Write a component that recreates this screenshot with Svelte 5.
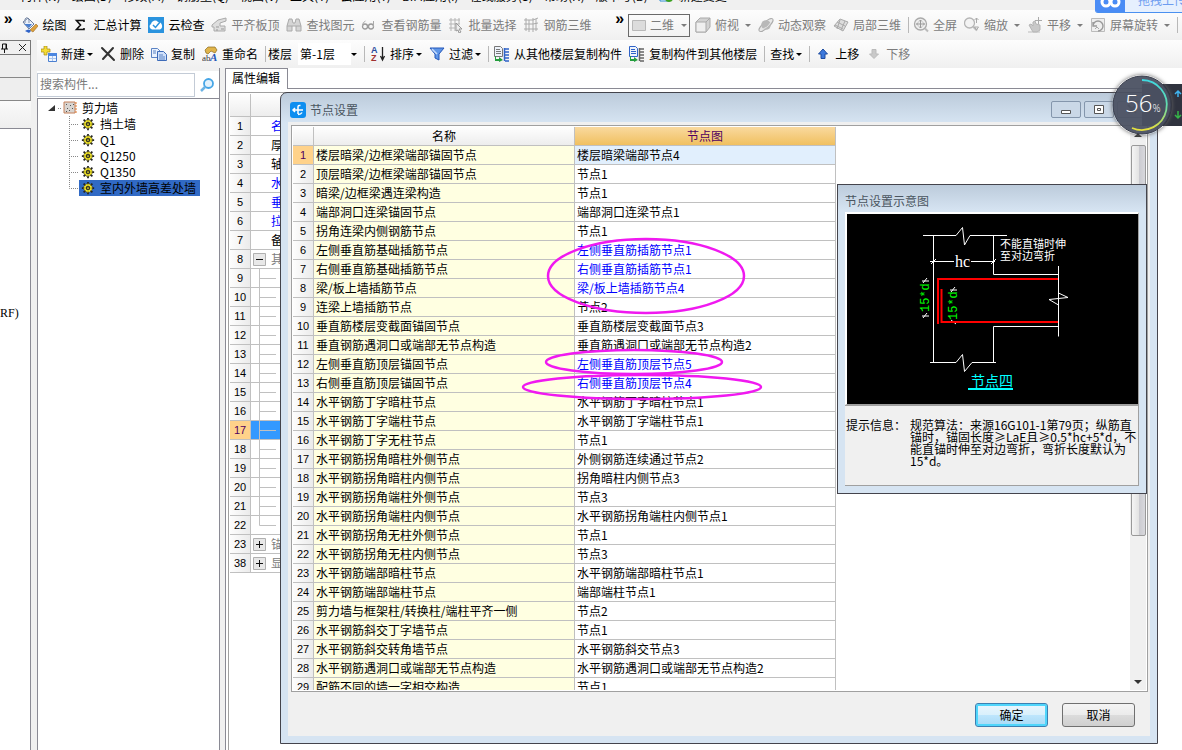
<script lang="ts">
    interface Tool {
        icon?: string;
        label?: string;
        caret?: boolean;
        off?: boolean;
        sep?: boolean;
    }

    const menus = ["构件(N)", "绘图(D)", "修改(M)", "钢筋量(Q)", "视图(V)", "工具(T)", "云应用(Y)", "BIM应用(I)", "在线服务(S)", "帮助(H)", "版本号(B)"];

    const mainTools: Tool[] = [
        { icon: "paint", label: "绘图" },
        { icon: "sum", label: "汇总计算" },
        { icon: "cloud", label: "云检查" },
        { icon: "slab", label: "平齐板顶", off: true },
        { icon: "find", label: "查找图元", off: true },
        { icon: "glasses", label: "查看钢筋量", off: true },
        { icon: "batch", label: "批量选择", off: true },
        { icon: "mesh", label: "钢筋三维", off: true },
    ];

    const viewTools: Tool[] = [
        { icon: "cube", label: "俯视", caret: true, off: true },
        { icon: "planet", label: "动态观察", off: true },
        { icon: "part", label: "局部三维", off: true },
        { sep: true },
        { icon: "full", label: "全屏", off: true },
        { icon: "zoom", label: "缩放", caret: true, off: true },
        { icon: "pan", label: "平移", caret: true, off: true },
        { icon: "rotate", label: "屏幕旋转", caret: true, off: true },
        { sep: true },
    ];

    const editTools: Tool[] = [
        { icon: "new", label: "新建", caret: true },
        { icon: "delete", label: "删除" },
        { icon: "copy", label: "复制" },
        { icon: "rename", label: "重命名" },
        { sep: true },
    ];

    const floorTools: Tool[] = [
        { sep: true },
        { icon: "sort", label: "排序", caret: true },
        { icon: "filter", label: "过滤", caret: true },
        { sep: true },
        { icon: "copyFrom", label: "从其他楼层复制构件" },
        { icon: "copyTo", label: "复制构件到其他楼层" },
        { sep: true },
        { label: "查找", caret: true },
        { sep: true },
        { icon: "up", label: "上移" },
        { icon: "down", label: "下移", off: true },
    ];

    const walls = ["挡土墙", "Q1", "Q1250", "Q1350", "室内外墙高差处墙"];
    let currentWall = $state(4);

    const props = [
        { no: 1, name: "名称", kind: "key" },
        { no: 2, name: "厚度", kind: "" },
        { no: 3, name: "轴线", kind: "" },
        { no: 4, name: "水平", kind: "key" },
        { no: 5, name: "垂直", kind: "key" },
        { no: 6, name: "拉筋", kind: "key" },
        { no: 7, name: "备注", kind: "" },
        { no: 8, name: "其它", kind: "open" },
        ...Array.from({ length: 14 }, (_, i) => ({ no: i + 9, name: "", kind: "child" })),
        { no: 23, name: "锚固", kind: "closed" },
        { no: 38, name: "显示", kind: "closed" },
    ];

    const nodes = [
        ["楼层暗梁/边框梁端部锚固节点", "楼层暗梁端部节点4"],
        ["顶层暗梁/边框梁端部锚固节点", "节点1"],
        ["暗梁/边框梁遇连梁构造", "节点1"],
        ["端部洞口连梁锚固节点", "端部洞口连梁节点1"],
        ["拐角连梁内侧钢筋节点", "节点1"],
        ["左侧垂直筋基础插筋节点", "左侧垂直筋插筋节点1"],
        ["右侧垂直筋基础插筋节点", "右侧垂直筋插筋节点1"],
        ["梁/板上墙插筋节点", "梁/板上墙插筋节点4"],
        ["连梁上墙插筋节点", "节点2"],
        ["垂直筋楼层变截面锚固节点", "垂直筋楼层变截面节点3"],
        ["垂直钢筋遇洞口或端部无节点构造", "垂直筋遇洞口或端部无节点构造2"],
        ["左侧垂直筋顶层锚固节点", "左侧垂直筋顶层节点5"],
        ["右侧垂直筋顶层锚固节点", "右侧垂直筋顶层节点4"],
        ["水平钢筋丁字暗柱节点", "水平钢筋丁字暗柱节点1"],
        ["水平钢筋丁字端柱节点", "水平钢筋丁字端柱节点1"],
        ["水平钢筋丁字无柱节点", "节点1"],
        ["水平钢筋拐角暗柱外侧节点", "外侧钢筋连续通过节点2"],
        ["水平钢筋拐角暗柱内侧节点", "拐角暗柱内侧节点3"],
        ["水平钢筋拐角端柱外侧节点", "节点3"],
        ["水平钢筋拐角端柱内侧节点", "水平钢筋拐角端柱内侧节点1"],
        ["水平钢筋拐角无柱外侧节点", "节点1"],
        ["水平钢筋拐角无柱内侧节点", "节点3"],
        ["水平钢筋端部暗柱节点", "水平钢筋端部暗柱节点1"],
        ["水平钢筋端部端柱节点", "端部端柱节点1"],
        ["剪力墙与框架柱/转换柱/端柱平齐一侧", "节点2"],
        ["水平钢筋斜交丁字墙节点", "节点1"],
        ["水平钢筋斜交转角墙节点", "水平钢筋斜交节点3"],
        ["水平钢筋遇洞口或端部无节点构造", "水平钢筋遇洞口或端部无节点构造2"],
        ["配筋不同的墙一字相交构造", "节点1"],
    ];
    const changed = [6, 7, 8, 12, 13];
    let currentNode = $state(1);
</script>

{#snippet icon(name: string)}
    <svg class="icon" viewBox="0 0 16 16" width="16" height="16" aria-hidden="true">
        {#if name === "paint"}
            <path d="M1 5 6 1l6 6-5 5z" fill="#eaf0fa" stroke="#6b7d9c" />
            <path d="M3 6V2q2-3 4 1v3" fill="none" stroke="#8493ad" />
            <path d="M2 7h8l-3 4z" fill="#4a7fd0" />
            <path d="m8 13 6-6 2 2-5 6z" fill="#dda13c" stroke="#9c6a22" stroke-width=".6" />
            <path d="M3 14q4-3 6 0l-2 2z" fill="#2f63c8" />
        {:else if name === "sum"}
            <path d="M11 5V3.500H3.500L7.500 8l-4 4.500H11V11" fill="none" stroke="#111" stroke-width="1.600" />
        {:else if name === "cloud"}
            <path d="M0 0h16v16H0z" fill="#2a93de" />
            <path d="M4 12.500a3 3 0 0 1-1-5.500 4 4 0 0 1 7-2 4 4 0 0 1 2 7.500z" fill="#fff" />
            <path d="m5 8 2.500 2.500L12 5" fill="none" stroke="#2a93de" stroke-width="1.500" />
        {:else if name === "slab"}
            <path d="M1 8 7 3l8-2v3L9 6v3h5v5H3v-4H1z" fill="#dedede" stroke="#aaa" />
            <path d="M5 10h3m2 2h3M5 13h2" stroke="#999" />
        {:else if name === "find"}
            <path d="m1 9 2-7h3l1 4h2l1-4h3l2 7v5h-5V9H6v5H1z" fill="#d5d5d5" stroke="#aaa" />
            <path d="M1 9h5m4 0h5" stroke="#aaa" />
        {:else if name === "glasses"}
            <circle cx="4" cy="9.500" r="2.500" fill="none" stroke="#999" stroke-width="1.300" />
            <circle cx="10" cy="9.500" r="2.500" fill="none" stroke="#999" stroke-width="1.300" />
            <path d="M1.500 9q0-4 3-5m8 6V4M6.500 9h1" fill="none" stroke="#aaa" />
        {:else if name === "batch"}
            <path d="M1 3h11M1 7h11M1 11h6M3 1v13M7 1v13M11 1v6" stroke="#b5b5b5" />
            <path d="m8 6 6 6h-3l2 3-2 1-1-3-2 1z" fill="#eee" stroke="#999" />
        {:else if name === "mesh"}
            <path d="M1 3h9l5-2M1 7h9l5-1M1 12h14M3 1v13M6 3v12M10 1v14M13 2v12" fill="none" stroke="#aaa" />
        {:else if name === "flat"}
            <path d="M1.500 3.500h13v10h-13z" fill="#dcdcdc" stroke="#b8b8b8" />
        {:else if name === "cube"}
            <path d="M1 5 5 1h10v9l-4 5H1z" fill="#d2d2d2" stroke="#aaa" />
            <path d="M1 5h10v10H1z" fill="#efefef" stroke="#aaa" />
            <path d="m11 5 4-4" stroke="#aaa" />
        {:else if name === "planet"}
            <ellipse cx="8" cy="8" rx="9" ry="3" transform="rotate(-42 8 8)" fill="#e8e8e8" stroke="#aaa" />
            <circle cx="8" cy="8" r="4.800" fill="#b8b8b8" />
            <path d="M3 12Q9 12 13 5" fill="none" stroke="#e5e5e5" />
        {:else if name === "part"}
            <path d="m1 9 6-7 8 3-5 9z" fill="#ddd" stroke="#aaa" />
            <path d="m4 5 8 4M7 3 4 12m8-8-4 9M2 8l8 4" stroke="#aaa" />
        {:else if name === "full"}
            <circle cx="7.500" cy="7" r="6" fill="#eee" stroke="#aaa" stroke-width="1.300" />
            <path d="M7.500 3v8m-4-4h8M6 4.500 7.500 3 9 4.500M6 9.500 7.500 11 9 9.500m1-4L11.500 7 10 8.500M5 5.500 3.500 7 5 8.500" fill="none" stroke="#999" />
            <path d="m12 11.500 3 3" stroke="#bbb" stroke-width="2" />
        {:else if name === "zoom"}
            <circle cx="5.500" cy="6" r="5" fill="#f3f3f3" stroke="#b5b5b5" stroke-width="1.300" />
            <path d="m9 9.500 4 4" stroke="#bbb" stroke-width="2" />
            <path d="M12.500 1v5m-2-3 2-2 2 2m-4 7h4l-2 3z" fill="none" stroke="#aaa" />
        {:else if name === "pan"}
            <path d="m2 8 2-1 2 2V5l2-1 1 3 4 1v5l-3 2H6z" fill="#c9c9c9" stroke="#b5b5b5" />
            <path d="M11.500 0v7M8 3.500h7" stroke="#aaa" />
            <path d="M1 15h12" stroke="#bbb" />
        {:else if name === "rotate"}
            <path d="M1.500 1.500h13v13h-13z" fill="#eee" stroke="#bbb" />
            <path d="M3 9a5 5 0 1 1 5 5M3 5v4h4" fill="none" stroke="#999" stroke-width="1.400" />
            <path d="m5 12 2-2 2 2" fill="none" stroke="#aaa" />
        {:else if name === "new"}
            <path d="M3 0h3v3h3v3H6v3H3V6H0V3h3z" fill="#f5dc35" stroke="#a88b18" stroke-width=".7" />
            <path d="M7.500 7.500h8v8h-8z" fill="#eef5ff" stroke="#4b7fd0" />
            <path d="M7 7h9v3H7z" fill="#4b86e0" />
            <path d="M8 12.500h7M11.500 10v5" stroke="#a9c4ec" />
        {:else if name === "delete"}
            <path d="m2 2 12 12M13 2 3 13" stroke="#333" stroke-width="2" stroke-linecap="round" />
        {:else if name === "copy"}
            <path d="M.5 2.500h6l3 3v6h-9z" fill="#e9f1fd" stroke="#5b83c4" />
            <path d="M6.500 5.500h6l3 3v6h-9z" fill="#cfe0fa" stroke="#3d6bb8" />
            <path d="M2 5h3M2 7h3M8 9h4m-4 2h6m-6 2h6" stroke="#5b83c4" />
        {:else if name === "rename"}
            <path d="m3 4 3-3h7l2 3-2 3-4-2-3 3-2-1z" fill="#e0b44a" stroke="#8a6a20" stroke-width=".7" />
            <text x="0" y="15" font-size="9" font-family="Liberation Serif, serif" fill="#333">ab</text>
            <text x="8" y="15" font-size="11" font-weight="bold" font-style="italic" font-family="Liberation Serif, serif" fill="#2456b8">A</text>
        {:else if name === "sort"}
            <text x="1" y="7" font-size="9" font-weight="bold" font-family="Liberation Sans, sans-serif" fill="#2b4c9c">A</text>
            <text x="1" y="15" font-size="9" font-weight="bold" font-family="Liberation Sans, sans-serif" fill="#a03030">Z</text>
            <path d="M12.500 1v12m-2-3 2 4 2-4" fill="none" stroke="#222" stroke-width="1.300" />
        {:else if name === "filter"}
            <path d="M1 2h14l-5 6v6l-4-2V8z" fill="#5f96e8" stroke="#2456b8" />
            <path d="m3 3 5 5" stroke="#c7dcfb" stroke-width="1.500" />
        {:else if name === "copyFrom" || name === "copyTo"}
            <g class={name}>
                <path class="page" d="M.5.5h6l2 2v8h-8z" />
                <path class="line" d="M2 3.500h4M2 5.500h5M2 7.500h5" />
                <path class="stack" d="M11 3h4M11 6h4M11 9h4M11 12h4M11 15h4M10.500 2v13" />
            </g>
            <path d="M2 10v3h3v-2l4 3-4 2v-1H1v-5z" fill="#239c3c" />
        {:else if name === "up"}
            <path d="M8 3 3.500 8H6v4.500h4V8h2.500z" fill="#3c78dc" stroke="#1d4ba0" />
        {:else if name === "down"}
            <path d="M8 12.500 3.500 8H6V3.500h4V8h2.500z" fill="#c9c9c9" stroke="#bbb" />
        {:else if name === "gear"}
            <path d="M8 1v14M1 8h14M3 3l10 10M13 3 3 13" stroke="#222" stroke-width="2" />
            <circle cx="8" cy="8" r="5" fill="#f5e928" stroke="#333" stroke-dasharray="2 1" />
            <path d="M8 3v10M3 8h10M4.500 4.500l7 7m0-7-7 7" stroke="#77701a" stroke-width=".7" />
            <circle cx="8" cy="8" r="1.700" fill="#f5e928" stroke="#222" stroke-width="1.400" />
        {:else if name === "wall"}
            <path d="M2 2h11v11H2z" fill="#d8d4d0" stroke="#c4805a" />
            <path d="M4 4h1v1H4zM8 5h1v1H8zM5 8h1v1H5zM10 8h1v1h-1zM7 10h1v1H7zM11 4h1v1h-1zM4 11h1v1H4z" fill="#555" />
            <path d="M13 3h2m-2 3h2m-2 3h2m-2 3h2" stroke="#e07b30" />
        {:else if name === "search"}
            <circle cx="9.500" cy="6.500" r="4.500" fill="#e3f2fd" stroke="#45a5e6" stroke-width="1.800" />
            <path d="m6 10-4 4" stroke="#6db3e4" stroke-width="2.500" />
        {/if}
    </svg>
{/snippet}

{#snippet tool(t: Tool)}
    {#if t.sep}
        <span class="sep"></span>
    {:else}
        <button class="tool" class:off={t.off}>
            {#if t.icon}{@render icon(t.icon)}{/if}
            <span>{t.label}</span>
            {#if t.caret}<i class="caret"></i>{/if}
        </button>
    {/if}
{/snippet}

<div class="app">
    <nav class="menubar">
        {#each menus as menu}
            <a href="#menu">{menu}</a>
        {/each}
        <a href="#change" class="change">
            <svg width="14" height="14" viewBox="0 0 14 14" aria-hidden="true">
                <path d="M1 0h10v13H1z" fill="#fff" stroke="#2d8ad0" />
                <circle cx="10" cy="10" r="4" fill="#3ba020" />
            </svg>
            新建变更
        </a>
    </nav>

    <div class="toolbar">
        <button class="more">»</button>
        <div class="tools main">
            {#each mainTools as t}{@render tool(t)}{/each}
        </div>
        <button class="more">»</button>
        <div class="tools view">
            <label class="dimension">
                {@render icon("flat")}
                <select aria-label="视图维度"><option>二维</option></select>
                <i class="caret"></i>
            </label>
            {#each viewTools as t}{@render tool(t)}{/each}
        </div>
    </div>

    <div class="workspace">
        <aside class="dock">
            <header>
                <svg width="30" height="13" viewBox="0 0 30 13" aria-hidden="true">
                    <path d="M1 8h7M4.500 8v4M2.500 8V3h4v5M6 3v5" fill="none" stroke="#111" />
                    <path d="m19 3 7 7m0-7-7 7" stroke="#222" />
                </svg>
            </header>
            <div class="slot"></div>
            <div class="slot"></div>
            <div class="strip"></div>
            <div class="floors">RF)</div>
        </aside>

        <div class="editor">
            <div class="toolbar edit">
                {#each editTools as t}{@render tool(t)}{/each}
                <label class="floor">
                    <span>楼层</span>
                    <select><option>第-1层</option></select>
                    <i class="caret"></i>
                </label>
                {#each floorTools as t}{@render tool(t)}{/each}
            </div>

            <div class="panes">
                <section class="members">
                    <div class="search">
                        <input type="text" placeholder="搜索构件..." aria-label="搜索构件" />
                        <button aria-label="搜索">{@render icon("search")}</button>
                    </div>
                    <div class="tree">
                        <div class="root">
                            <svg width="16" height="16" viewBox="0 0 16 16" aria-hidden="true">
                                <path d="M9 5v6H2z" fill="#333" />
                                <path d="M12 8.500h4" stroke="#888" stroke-dasharray="1 1" />
                            </svg>
                            {@render icon("wall")}
                            <span>剪力墙</span>
                        </div>
                        <ul>
                            {#each walls as wall, i}
                                <li>
                                    <svg width="10" height="16" viewBox="0 0 10 16" aria-hidden="true">
                                        <path d={i === walls.length - 1 ? "M.5 0v8.500H10" : "M.5 0v16M0 8.500h10"} fill="none" stroke="#888" stroke-dasharray="1 1" />
                                    </svg>
                                    <button class:current={i === currentWall} onclick={() => (currentWall = i)}>
                                        {@render icon("gear")}
                                        <span>{wall}</span>
                                    </button>
                                </li>
                            {/each}
                        </ul>
                    </div>
                </section>

                <section class="properties">
                    <div class="tabs"><button>属性编辑</button></div>
                    <div class="sheet">
                        <table>
                            <colgroup><col class="no" /><col /></colgroup>
                            <thead><tr><th></th><th></th></tr></thead>
                            <tbody>
                                {#each props as p (p.no)}
                                    <tr class:active={p.no === 17}>
                                        <th>{p.no}</th>
                                        <td class={p.kind}>
                                            <div class="prop">
                                                <svg width="26" height="18" viewBox="0 0 26 18" aria-hidden="true">
                                                    {#if p.kind === "child"}
                                                        <path d={p.no === 22 ? "M8.500 0v9.500H25" : "M8.500 0v18M9 9.500h16"} fill="none" stroke="#c0c0c0" />
                                                    {:else if p.kind === "open" || p.kind === "closed"}
                                                        <path d="M2.500 3.500h12v12h-12z" fill="#e8e8e8" stroke="#b0b0b0" />
                                                        <path d={p.kind === "open" ? "M5 9.500h7" : "M5 9.500h7M8.500 6v7"} stroke="#111" />
                                                    {/if}
                                                </svg>
                                                <span>{p.name}</span>
                                            </div>
                                        </td>
                                    </tr>
                                {/each}
                            </tbody>
                        </table>
                    </div>
                </section>
            </div>
        </div>
    </div>

    <div class="dialog" role="dialog" aria-label="节点设置">
        <header>
            <svg width="16" height="16" viewBox="0 0 16 16" aria-hidden="true">
                <rect width="16" height="16" rx="3" fill="#0d8ef0" />
                <path d="M8 12V5q0-2 2.500-1.500M3 8h10M5 6 3 8l2 2m3 2.500q3 0 4-2" fill="none" stroke="#fff" stroke-width="1.500" />
            </svg>
            <h2>节点设置</h2>
            <button aria-label="最小化">
                <svg width="28" height="15" viewBox="0 0 28 15"><path d="M9.500 8.500h9v3h-9z" fill="#fff" stroke="#555" /></svg>
            </button>
            <button aria-label="最大化">
                <svg width="28" height="15" viewBox="0 0 28 15"><path d="M9.500 3.500h9v8h-9zM12.500 6.500h3v2h-3z" fill="#fff" stroke="#555" /></svg>
            </button>
            <button aria-label="关闭">
                <svg width="28" height="15" viewBox="0 0 28 15"><path d="m10 3 8 8m0-8-8 8" stroke="#555" stroke-width="2" /></svg>
            </button>
        </header>
        <div class="body">
            <div class="list">
                <div class="rows">
                    <table>
                        <colgroup><col class="no" /><col class="wide" /><col class="wide" /></colgroup>
                        <thead>
                            <tr><th></th><th>名称</th><th class="hot">节点图</th></tr>
                        </thead>
                        <tbody>
                            {#each nodes as [name, figure], i}
                                <tr class:active={i + 1 === currentNode} onclick={() => (currentNode = i + 1)}>
                                    <th>{i + 1}</th>
                                    <td class="name">{name}</td>
                                    <td class:key={changed.includes(i + 1)}>{figure}</td>
                                </tr>
                            {/each}
                        </tbody>
                    </table>
                </div>
                <div class="scroll">
                    <i class="arrow up"></i>
                    <i class="thumb"></i>
                    <i class="arrow"></i>
                </div>
            </div>
            <footer>
                <button class="ok">确定</button>
                <button>取消</button>
            </footer>
        </div>
    </div>

    <div class="figure" role="dialog" aria-label="节点设置示意图">
        <h2>节点设置示意图</h2>
        <div class="canvas">
            <svg width="290" height="190" viewBox="0 0 290 190" fill="none" stroke="#fff">
                <path d="M76 21.500h33l6.500-8 2 17.500 5.500-9.500H160" />
                <path d="M86.500 21.500v127M146.500 21.500v39h65M211.500 52v70.500M211.500 79l9.500 4.500-19 2 9.500 5.500M211.500 112.500h-65v36" />
                <path d="M83 148.500h26l6.500-8 2 17 7.500-9H149" />
                <path d="M83 47.500h24m17 0h24M84 50l5-5m55 5 5-5" />
                <path d="M75 67h7m-6 2 4-5M75 102h7m-6 2 4-5M103 76h7m-6 2 4-5M104 108h8m-8-2 5 4" />
                <path d="M211 65H91v45M94.500 75v33H211" stroke="#f00" stroke-width="2" />
                <g stroke="none">
                    <text x="108" y="53" class="dim">hc</text>
                    <text transform="translate(82 98) rotate(-90)" class="bar">15*d</text>
                    <text transform="translate(110 106) rotate(-90)" class="bar">15*d</text>
                    <text x="153" y="34" class="remark">不能直锚时伸</text>
                    <text x="153" y="46" class="remark">至对边弯折</text>
                    <text x="124" y="172" class="caption">节点四</text>
                </g>
                <path d="M121 175h45" stroke="#0ff" stroke-width="2" />
            </svg>
        </div>
        <div class="hint">
            <span>提示信息：</span>
            <p>规范算法：来源16G101-1第79页；纵筋直<br />锚时，锚固长度≥LaE且≥0.5*hc+5*d，不<br />能直锚时伸至对边弯折，弯折长度默认为<br />15*d。</p>
        </div>
    </div>

    <svg class="marks" width="300" height="180" viewBox="500 230 300 180" aria-hidden="true">
        <ellipse cx="646" cy="276" rx="98" ry="37" />
        <ellipse cx="634" cy="362" rx="88" ry="12" />
        <ellipse cx="642" cy="387" rx="119" ry="12" />
    </svg>

    <div class="upload">
        <svg width="30" height="12" viewBox="0 0 30 12" aria-hidden="true">
            <circle cx="11" cy="2" r="4" fill="none" stroke="#fff" stroke-width="3" />
            <circle cx="20" cy="2" r="4" fill="none" stroke="#fff" stroke-width="3" />
        </svg>
        <span>拖拽上传</span>
    </div>

    <div class="speed">
        <svg width="10" height="42" viewBox="0 0 10 42" aria-hidden="true">
            <path d="M6 13V7M3 10l3-3 3 3" fill="none" stroke="#3fb4f0" stroke-width="1.500" />
            <path d="M6 27v7m-3-3 3 3 3-3" fill="none" stroke="#36b848" stroke-width="1.500" />
        </svg>
    </div>
    <div class="gauge">
        <svg width="60" height="60" viewBox="0 0 60 60" aria-hidden="true">
            <defs>
                <linearGradient id="arc" x1="0" y1="0" x2="0" y2="1">
                    <stop offset="0" stop-color="#3fd8e0" />
                    <stop offset=".5" stop-color="#62dcae" />
                    <stop offset="1" stop-color="#e8e03c" />
                </linearGradient>
            </defs>
            <circle cx="30" cy="30" r="29" fill="#4b5162" fill-opacity=".95" stroke="#3a3e4c" />
            <path d="M30 5a25 25 0 1 1-10 48" fill="none" stroke="url(#arc)" stroke-width="1.800" />
        </svg>
        <span>56<small>%</small></span>
    </div>
</div>

<style>
    :global(body) {
        margin: 0;
        font: 12px/16px "Noto Sans CJK SC", sans-serif;
        color: #000;
    }
    .app {
        position: relative;
        display: flex;
        flex-direction: column;
        height: 100vh;
        overflow: hidden;
        background: #f0f0f0;
    }
    button,
    input,
    select {
        font: inherit;
        color: inherit;
        margin: 0;
        padding: 0;
        border: 0;
        background: none;
        appearance: none;
    }
    svg {
        display: block;
        flex: none;
    }
    h2 {
        margin: 0;
        font-size: 12px;
        font-weight: normal;
        color: #4a5560;
    }

    .menubar {
        display: flex;
        align-items: flex-end;
        gap: 11px;
        height: 4px;
        padding: 0 20px 6px;
        overflow: hidden;
    }
    .menubar a {
        color: #000;
        text-decoration: none;
        white-space: nowrap;
    }
    .menubar .change {
        display: flex;
        gap: 6px;
    }

    .toolbar {
        display: flex;
        align-items: center;
        height: 30px;
        background: linear-gradient(#fdfdfd, #f0f0f0);
        white-space: nowrap;
    }
    .tools {
        display: flex;
        align-items: center;
    }
    .more {
        width: 19px;
        height: 26px;
        padding-bottom: 8px;
        font: bold 16px/16px "Liberation Sans", sans-serif;
        align-self: flex-start;
    }
    .main {
        padding: 0 13px 0 6px;
    }
    .tool {
        display: flex;
        align-items: center;
        gap: 4px;
        margin-right: 7px;
    }
    .off,
    .dimension {
        color: #7c7c7c;
    }
    .caret {
        margin-left: 3px;
        border: 3px solid transparent;
        border-top-color: currentColor;
        border-bottom: 0;
    }
    .tool .caret {
        margin-left: -2px;
    }
    .view .tool .caret {
        margin-left: 2px;
    }
    .sep {
        width: 1px;
        height: 16px;
        margin-right: 5px;
        background: #b8b8b8;
    }
    .view .sep {
        margin-right: 4px;
    }
    .dimension {
        display: flex;
        align-items: center;
        gap: 3px;
        box-sizing: border-box;
        height: 23px;
        width: 62px;
        margin: 0 5px 0 0;
        padding: 0 2px;
        border: 1px solid #6a6a6a;
    }
    .dimension select {
        width: 26px;
    }

    .workspace {
        flex: 1;
        display: grid;
        grid-template-columns: 31px 1fr;
        column-gap: 6px;
        min-height: 0;
    }
    .dock {
        display: flex;
        flex-direction: column;
        font-family: "Liberation Serif", serif;
    }
    .dock header {
        border: 1px solid #777;
        border-left: 0;
    }
    .slot {
        box-sizing: border-box;
        height: 23px;
        border-right: 1px solid #999;
        border-bottom: 1px solid #888;
        background: #eee;
    }
    .strip {
        height: 27px;
        border-bottom: 1px solid #8a8a94;
        background: linear-gradient(#fafafa, #eee);
    }
    .floors {
        flex: 1;
        padding-top: 176px;
        border-right: 1px solid #8a8a94;
        background: #fff;
    }
    .editor {
        display: flex;
        flex-direction: column;
        min-width: 0;
    }
    .edit {
        flex: none;
        height: 28px;
        padding-left: 4px;
    }
    .floor {
        display: flex;
        align-items: center;
        margin-left: -3px;
    }
    .floor select {
        width: 53px;
        height: 22px;
        margin-left: 6px;
        padding-left: 2px;
        box-sizing: border-box;
        background: #fff;
    }
    .floor .caret {
        margin: 0 7px 0 0;
    }
    .panes {
        flex: 1;
        display: grid;
        grid-template-columns: 183px 1fr;
        column-gap: 5px;
        min-height: 0;
    }
    .members {
        display: flex;
        flex-direction: column;
        padding-top: 3px;
        border-right: 1px solid #8a8a94;
    }
    .search {
        display: flex;
        align-items: center;
        gap: 4px;
        height: 27px;
        background: #fff;
    }
    .search input {
        box-sizing: border-box;
        width: 158px;
        height: 24px;
        padding: 0 2px 2px;
        border: 1px solid #c3cbd6;
    }
    .search input::placeholder {
        color: #7a7a7a;
        opacity: 1;
    }
    .tree {
        flex: 1;
        padding: 1px 0 0 8px;
        border: solid #8a8a94;
        border-width: 1px 0 0 1px;
        background: #fff;
    }
    .root,
    .tree li,
    .tree li button {
        display: flex;
        align-items: center;
        height: 16px;
    }
    .root span {
        margin-left: 4px;
    }
    .tree ul {
        margin: 0;
        padding: 0 0 0 23px;
        list-style: none;
    }
    .tree li button {
        gap: 5px;
        padding: 0 4px 0 2px;
    }
    .tree li .icon {
        width: 14px;
        height: 14px;
    }
    .tree li .current {
        background: #316ac5;
    }

    .properties {
        display: flex;
        flex-direction: column;
        min-width: 0;
        border-left: 1px solid #8a8a94;
        background: #fff;
    }
    .tabs {
        height: 20px;
        border-bottom: 1px solid #8a8a94;
    }
    .tabs button {
        height: 21px;
        padding: 0 7px 2px 6px;
        border-right: 1px solid #8a8a94;
        border-top: 1px solid #8a8a94;
        background: #fff;
    }
    .sheet {
        flex: 1;
        width: 100px;
        margin: 3px 0 0 2px;
        padding: 1px;
        border: solid #a0a0a0;
        border-width: 1px 0 0 1px;
        overflow: hidden;
    }
    table {
        width: 100%;
        table-layout: fixed;
        border-spacing: 0;
    }
    .no {
        width: 21px;
    }
    .wide {
        width: 261px;
    }
    th,
    td {
        box-sizing: border-box;
        height: 19px;
        padding: 0;
        border: solid #c0c0c0;
        border-width: 0 1px 1px 0;
        font-weight: normal;
        line-height: 18px;
        white-space: nowrap;
    }
    tbody th {
        font: 11px/18px "Liberation Sans", sans-serif;
        background: linear-gradient(90deg, #fdfdfd, #ebebeb);
    }
    thead th {
        background: linear-gradient(#fefefe, #ededed);
    }
    .sheet thead th {
        height: 23px;
    }
    .prop {
        display: flex;
        height: 18px;
    }
    .prop span {
        margin-left: -6px;
    }
    .open,
    .closed {
        color: #808080;
    }
    .key {
        color: #0000ff;
    }
    .active th {
        color: #500060;
        background: #ffd28a;
    }
    .sheet .active td {
        background: #3399ff;
    }

    .dialog {
        position: absolute;
        inset: 92px 24px 6px 280px;
        display: flex;
        flex-direction: column;
        box-sizing: border-box;
        padding: 0 7px 7px;
        border: 1px solid #44444c;
        border-radius: 7px 7px 0 0;
        background: linear-gradient(#bccbdb, #d6e4f2 30px);
    }
    .dialog header {
        display: flex;
        align-items: center;
        gap: 3px;
        height: 29px;
        padding: 4px 3px 0 2px;
        box-sizing: border-box;
    }
    .dialog h2 {
        flex: 1;
        margin-left: 1px;
    }
    .dialog header button {
        border: 1px solid #8496ac;
        border-radius: 2px;
        background: #cad8e7;
    }
    .body {
        flex: 1;
        display: flex;
        flex-direction: column;
        min-height: 0;
        padding: 3px 2px 0 3px;
        background: #f0f0f0;
    }
    .list {
        flex: 1;
        display: flex;
        justify-content: space-between;
        min-height: 0;
        padding: 1px;
        border: 1px solid #a0a0a0;
        background: #fff;
    }
    .rows {
        width: 543px;
        overflow: hidden;
    }
    .rows td {
        padding-left: 2px;
        overflow: hidden;
    }
    .rows .name {
        background: #ffffe1;
    }
    .rows .hot {
        color: #500060;
        background: linear-gradient(#f9d99f, #f0c060);
    }
    .rows .active td:not(.name) {
        background: #e1effd;
    }
    .scroll {
        display: flex;
        flex-direction: column;
        align-items: center;
        width: 16px;
        padding: 6px 0;
        box-sizing: border-box;
        background: #f0f0f0;
    }
    .thumb {
        box-sizing: border-box;
        width: 15px;
        height: 391px;
        margin: 8px 0 auto;
        border: 1px solid #999;
        border-radius: 2px;
        background: linear-gradient(90deg, #f5f5f5, #e4e4e4 50%, #c9c9cf 50%, #d8d8dc);
    }
    .arrow {
        border: 4px solid transparent;
        border-top-color: #333;
        border-bottom: 0;
    }
    .arrow.up {
        border: 4px solid transparent;
        border-bottom-color: #333;
        border-top: 0;
    }
    footer {
        display: flex;
        justify-content: flex-end;
        gap: 14px;
        padding: 11px 13px 9px;
    }
    footer button {
        box-sizing: border-box;
        width: 73px;
        height: 24px;
        border: 1px solid #707070;
        border-radius: 3px;
        background: linear-gradient(#f4f4f4, #ebebeb 50%, #dcdcdc 50%, #cfcfcf);
    }
    footer .ok {
        border-color: #3c7fb1;
        box-shadow: inset 0 0 0 2px #4fd5fb;
        background: linear-gradient(#eaf6fd, #d9f0fc 50%, #bee6fd 50%, #a7d9f5);
    }

    .figure {
        position: absolute;
        top: 184px;
        right: 35px;
        box-sizing: border-box;
        width: 310px;
        height: 310px;
        padding: 0 7px;
        border: 1px solid #44444c;
        background: linear-gradient(#bccbdb, #d6e4f2 26px);
    }
    .figure h2 {
        padding: 8px 0 3px;
    }
    .canvas {
        border: solid #fff;
        border-width: 2px 1px 1px 2px;
        border-right-color: #a0a0a0;
        border-bottom-color: #a0a0a0;
        background: #000;
    }
    .dim {
        font: 16px "Liberation Serif", serif;
        fill: #fff;
    }
    .bar {
        font: 12px "Liberation Mono", monospace;
        fill: #0f0;
    }
    .remark {
        font-size: 11px;
        fill: #fff;
    }
    .caption {
        font-size: 14px;
        fill: #0ff;
    }
    .hint {
        display: flex;
        height: 66px;
        padding: 13px 0 0 1px;
        border: solid #a0a0a0;
        border-width: 1px 1px 1px 0;
        line-height: 12px;
        background: #f0f0f0;
        white-space: nowrap;
    }
    .hint span {
        width: 64px;
    }
    .hint p {
        margin: 0;
    }

    .marks {
        position: absolute;
        top: 230px;
        left: 500px;
        fill: none;
        stroke: #f019f0;
        stroke-width: 2.5;
    }
    .copyFrom {
        --page: #777;
        --stack: #2f63c8;
    }
    .copyTo {
        --page: #2f63c8;
        --stack: #666;
    }
    .page {
        fill: #eef3fb;
        stroke: var(--page);
    }
    .line {
        stroke: var(--page);
    }
    .stack {
        fill: none;
        stroke: var(--stack);
        stroke-width: 1.5;
    }

    .upload {
        position: absolute;
        top: 0;
        right: 0;
        display: flex;
        align-items: flex-end;
        gap: 13px;
        width: 87px;
        height: 12px;
        border-bottom: 1px solid #4a90f0;
        border-radius: 0 0 0 3px;
        overflow: hidden;
        color: #6d9cf0;
        background: #e6f0fe;
        white-space: nowrap;
    }
    .upload svg {
        background: #4a8cf5;
    }
    .upload span {
        line-height: 24px;
    }
    .speed {
        position: absolute;
        top: 84px;
        right: 0;
        display: flex;
        justify-content: flex-end;
        width: 40px;
        height: 42px;
        background: #30333f;
    }
    .gauge {
        position: absolute;
        top: 75px;
        right: 10px;
        display: grid;
        border-radius: 50%;
        box-shadow: 0 0 4px #666;
    }
    .gauge > * {
        grid-area: 1 / 1;
    }
    .gauge span {
        align-self: center;
        padding-left: 13px;
        font: 300 24px/28px "Open Sans", "Noto Sans", sans-serif;
        color: #fff;
    }
    .gauge small {
        font-size: 10px;
    }
</style>
